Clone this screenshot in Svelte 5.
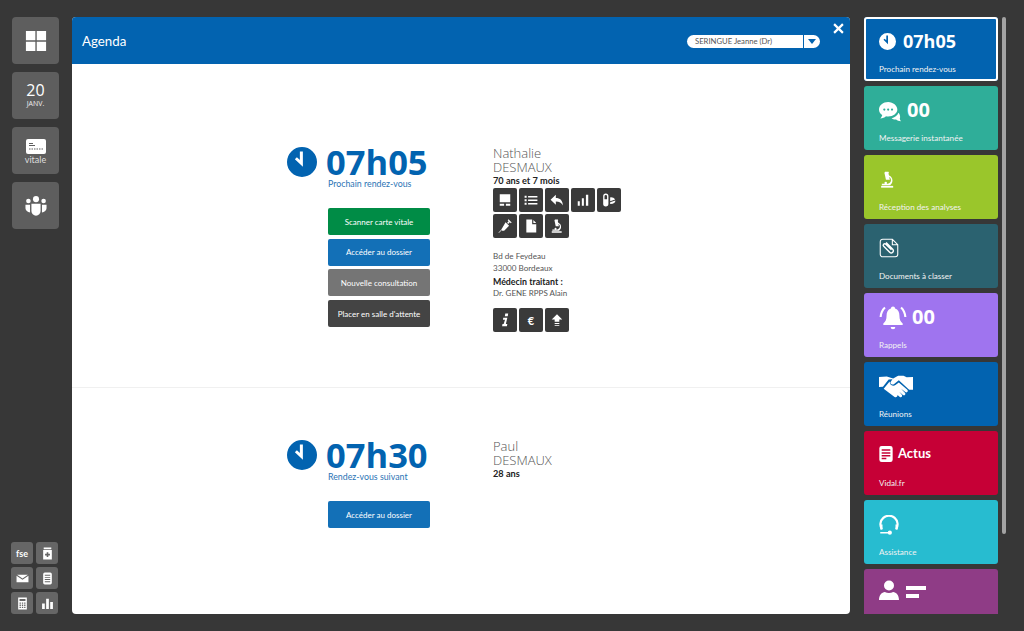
<script>
  const leftTiles = ['grid', 'date', 'vitale', 'team'];
  const smallTools = ['fse', 'box', 'mail', 'note', 'calc', 'bars'];
  const actions = ['screen', 'list', 'back', 'signal', 'pills', 'syringe', 'doc', 'micro'];
  const infos = ['info', 'euro', 'up'];
  const tiles = [
    { cls: 'blue active', icon: 'clock', value: '07h05', label: 'Prochain rendez-vous' },
    { cls: 'teal', icon: 'chat', value: '00', label: 'Messagerie instantanée' },
    { cls: 'green', icon: 'micro', value: '', label: 'Réception des analyses' },
    { cls: 'slate', icon: 'clip', value: '', label: 'Documents à classer' },
    { cls: 'violet', icon: 'bell', value: '00', label: 'Rappels' },
    { cls: 'blue', icon: 'hands', value: '', label: 'Réunions' },
    { cls: 'red', icon: 'news', value: 'Actus', label: 'Vidal.fr' },
    { cls: 'cyan', icon: 'head', value: '', label: 'Assistance' },
    { cls: 'purple', icon: 'person', value: '', label: '' }
  ];
</script>

{#snippet glyph(name)}
  <svg viewBox="0 0 24 24" fill="currentColor" class="glyph">
    {#if name === 'clock'}
      <path fill-rule="evenodd" d="M12 0a12 12 0 1 0 0 24 12 12 0 0 0 0-24zM10.300 3.500h2.400v12.300L6.300 9.700l1.600-1.600 2.400 2.300z" />
    {:else if name === 'chat'}
      <path d="M10 1C4.500 1 0 4.700 0 9.200c0 2.500 1.400 4.700 3.500 6.200-.2 1.400-1 2.700-2.100 3.800 2.600-.2 4.700-1.200 6.200-2.600.8.100 1.600.2 2.400.2 5.500 0 10-3.500 10-7.600S15.500 1 10 1z" />
      <path d="M21.200 12.800c-1.100 3-4 5.200-7.500 5.900 1.200 1.100 3 1.700 5 1.500 1.300 1 3 1.700 5.300 1.900-.8-.9-1.200-1.800-1.300-3 .9-1.800.2-4.500-1.500-6.300z" />
      <circle cx="5.800" cy="9.300" r="1.200" fill="var(--tile)" /><circle cx="10" cy="9.300" r="1.200" fill="var(--tile)" /><circle cx="14.200" cy="9.300" r="1.200" fill="var(--tile)" />
    {:else if name === 'micro'}
      <path d="M3 21h17v2.500H3z" />
      <path d="M8.500 1h5l.6 2h-.9l1 3.500c3 1.300 4.800 3.700 4.800 6.900 0 2.800-1.400 5-3.400 6.600H4v-2h8.500c2.400-.6 4.400-2.600 4.400-5 0-2-1-3.600-2.600-4.500l1 4H9.800L7.800 3h-.4z" />
      <circle cx="9.500" cy="17" r="1.800" />
    {:else if name === 'clip'}
      <path fill="none" stroke="currentColor" stroke-width="1.300" d="M4.500 1.500h11.500l6.500 6.500v11.500a3 3 0 0 1-3 3H4.500a3 3 0 0 1-3-3v-15a3 3 0 0 1 3-3zM16 1.500V8h6.500" />
      <path fill="none" stroke="currentColor" stroke-width="1.700" d="M8.500 5.500l8 8a2.600 2.600 0 0 1-3.700 3.700L5.600 10a1.800 1.800 0 0 1 2.600-2.600l6.800 6.800" />
    {:else if name === 'bell'}
      <path d="M12 3a1.800 1.800 0 0 1 1.800 1.800c2.700.9 3.700 3.100 3.700 6 0 3.700 1 5.400 2.800 6.700v1.300H3.700v-1.300c1.800-1.300 2.800-3 2.800-6.700 0-2.900 1-5.100 3.700-6A1.800 1.800 0 0 1 12 3zM10 20.600h4a2 2 0 0 1-4 0z" />
      <path d="M4.500 3.200l1.200 1.300C3.700 6.500 2.500 9 2.300 12H.5C.7 8.300 2.200 5.300 4.500 3.200zM19.500 3.200c2.300 2.100 3.800 5.100 4 8.800h-1.800c-.2-3-1.400-5.500-3.400-7.500z" />
    {:else if name === 'hands'}
      <path d="M0 5l5.500-.5 4.500 1.500 3.500-2h3.800l2.200 1.200 4.500-.2v9h-2.700l-1-1L14 7.300l-3.300 2.500c-1.400 1-3.200-.2-2.500-1.400l1.300-1.900-2.700.2-4 5.100L0 12z" />
      <path d="M3.300 13.300L7.500 8.200l.2 1.200c.4 1.500 2.600 2.200 3.900 1.200L14 8.800l6 5.200c1 1-.3 2.400-1.400 1.600l-3-2.400 2.800 3c.8 1-.5 2.200-1.500 1.400l-2.600-2.200 1.900 2.300c.6 1-.6 2-1.500 1.300l-1.600-1.300c.1 1.100-1 1.900-2.100 1.300z" />
    {:else if name === 'news'}
      <path fill-rule="evenodd" d="M5.500 0h13A3.500 3.500 0 0 1 22 3.500v17a3.500 3.500 0 0 1-3.500 3.500h-13A3.500 3.500 0 0 1 2 20.500v-17A3.500 3.500 0 0 1 5.500 0zM5.500 5v2.200h13V5zM5.500 9.300v2.200h13V9.300zM5.500 13.500v2.200h13v-2.200zM5.500 17.800V20h7v-2.200z" />
    {:else if name === 'head'}
      <path fill="none" stroke="currentColor" stroke-width="2.600" d="M3.500 17a10.300 10.300 0 1 1 17 0" />
      <path d="M1.500 11.500h2.700v6H1.500zM19.800 11.500h2.700v6h-2.700zM1.500 20.300h10v1.800h-10z" />
      <circle cx="13" cy="21.200" r="2.500" />
    {:else if name === 'person'}
      <circle cx="12" cy="6.500" r="6" />
      <path d="M0 24c0-6 3.500-9 7-9.500 3 1.500 7 1.500 10 0 3.500.5 7 3.500 7 9.500z" />
    {:else if name === 'grid'}
      <path d="M1 1h10.300v10.300H1zM12.800 1H23v10.300H12.800zM1 12.800h10.300V23H1zM12.800 12.800H23V23H12.800z" />
    {:else if name === 'team'}
      <circle cx="12" cy="4.500" r="3.300" /><circle cx="3.700" cy="6.500" r="2.500" /><circle cx="20.300" cy="6.500" r="2.500" />
      <path d="M7 9.500h10v8a5 5 0 0 1-10 0zM.5 10.500h5v8.500c-2.700-.3-5-2.200-5-4.500zM18.500 10.500h5v4c0 2.300-2.300 4.200-5 4.500z" />
    {:else if name === 'box'}
      <path fill-rule="evenodd" d="M5 1h14v3H5zM4 5.500h16V23H4zM10.500 9.500v3h-3v3h3v3h3v-3h3v-3h-3v-3z" />
    {:else if name === 'mail'}
      <path d="M2 5h20l-10 7zM1 7l11 7.500L23 7v12H1z" />
    {:else if name === 'note'}
      <path fill-rule="evenodd" d="M7 1h10a3 3 0 0 1 3 3v16a3 3 0 0 1-3 3H7a3 3 0 0 1-3-3V4a3 3 0 0 1 3-3zM7 5v1.800h10V5zM7 9v1.800h10V9zM7 13v1.800h10V13zM7 17v1.800h10V17z" />
    {:else if name === 'calc'}
      <path fill-rule="evenodd" d="M4 1h16v22H4zM6.500 3.500v4h11v-4zM6.500 10v2.500h2.500V10zM10.800 10v2.500h2.500V10zM15 10v2.500h2.500V10zM6.500 14v2.500h2.500V14zM10.800 14v2.500h2.500V14zM15 14v2.500h2.500V14zM6.500 18v2.500h2.500V18zM10.800 18v2.500h2.500V18zM15 18v2.500h2.500V18z" />
    {:else if name === 'bars'}
      <path d="M2 12h5v10H2zM9.500 3h5v19h-5zM17 9h5v13h-5z" />
    {:else if name === 'screen'}
      <path fill-rule="evenodd" d="M3 2h18v14H3zM3 18.500h7.500V22H3zM13.500 18.500H21V22h-7.500z" />
    {:else if name === 'list'}
      <path d="M1 4.500h3.500V8H1zM7 5h16v2.500H7zM1 10.500h3.500V14H1zM7 11h16v2.500H7zM1 16.500h3.500V20H1zM7 17h16v2.500H7z" />
    {:else if name === 'back'}
      <path d="M10 3v5.500c7 0 12 4 12 13-2-5-6-7-12-7V20L1 11.500z" />
    {:else if name === 'signal'}
      <path d="M3 14h3.500v8H3zM10 9h3.500v13H10zM17 3h4v19h-4z" />
    {:else if name === 'pills'}
      <path fill-rule="evenodd" d="M6.500 1a4.500 4.500 0 0 1 4.500 4.500v13a4.500 4.500 0 0 1-9 0v-13A4.500 4.500 0 0 1 6.500 1zM4.300 10.500h4.400v-5a2.200 2.200 0 0 0-4.400 0z" />
      <path d="M14 7.500c3-.6 6.500.4 8.500 3.500L14 14zM14 16l9-3.200c0 4-3.500 6.200-9 6z" />
    {:else if name === 'syringe'}
      <path d="M1.500 23.500L8 16.500" fill="none" stroke="currentColor" stroke-width="1.500" />
      <path d="M13 5.500l6 6-8.500 8.500-3.700.3-.3-3.800z" />
      <path d="M16.500 7.500l3.500-3.500" fill="none" stroke="currentColor" stroke-width="2.500" />
      <path d="M17.300 1.300l5.400 5.400" fill="none" stroke="currentColor" stroke-width="2" />
    {:else if name === 'doc'}
      <path d="M4 1h10v8h7v14H4zM16 1.500l5 5.500h-5z" />
    {:else if name === 'info'}
      <path d="M12.500 1h5l-.8 4.500h-5zM9 8h7l-2.500 11H16l-.7 3.500H7l.7-3.500h2L12 11.500H8.500z" />
    {:else if name === 'up'}
      <path d="M12 2l9 9h-5v4H8v-4H3zM8 17h8v2H8zM8 20.500h8V22H8z" />
    {/if}
  </svg>
{/snippet}

<div class="page">
  <nav class="rail">
    <div class="rail-top">
      {#each leftTiles as t}
        <button class="rail-tile">
          {#if t === 'date'}
            <span class="day">20</span>
            <span class="month">JANV.</span>
          {:else if t === 'vitale'}
            <svg viewBox="0 0 20 15" class="card-icon">
              <rect width="20" height="15" rx="2" fill="#fff" />
              <path d="M3 4h4v1H3zM3 6h6v1H3zM3 9.500h1.500v1H3zM5.500 9.500H7v1H5.500zM8 9.500h1.500v1H8zM10.500 9.500H12v1h-1.500zM13 9.500h1.500v1H13zM15.500 9.500H17v1h-1.500z" fill="#5e5e5e" />
            </svg>
            <span class="vit">vitale</span>
          {:else}
            <span class="rail-icon">{@render glyph(t)}</span>
          {/if}
        </button>
      {/each}
    </div>
    <div class="rail-tools">
      {#each smallTools as t}
        <button class="tool">
          {#if t === 'fse'}fse{:else}{@render glyph(t)}{/if}
        </button>
      {/each}
    </div>
  </nav>

  <main class="panel">
    <header class="panel-head">
      <h1>Agenda</h1>
      <div class="doctor">
        <span class="doctor-name">SERINGUE Jeanne (Dr)</span>
        <span class="doctor-arrow"></span>
      </div>
      <svg class="close" viewBox="0 0 10 10"><path d="M1 1l8 8M9 1l-8 8" stroke="#fff" stroke-width="2" /></svg>
    </header>

    <section class="slot first">
      <div class="slot-left">
        <div class="time-row">
          <span class="time-icon">{@render glyph('clock')}</span>
          <span class="time">07h05</span>
        </div>
        <div class="sub">Prochain rendez-vous</div>
        <div class="buttons">
          <button class="btn b-green">Scanner carte vitale</button>
          <button class="btn b-blue">Accéder au dossier</button>
          <button class="btn b-grey">Nouvelle consultation</button>
          <button class="btn b-dark">Placer en salle d'attente</button>
        </div>
      </div>
      <div class="slot-right">
        <div class="name">Nathalie<br />DESMAUX</div>
        <div class="age">70 ans et 7 mois</div>
        <div class="icons">
          {#each actions as a}
            <button class="act">{@render glyph(a)}</button>
          {/each}
        </div>
        <div class="addr">Bd de Feydeau<br />33000 Bordeaux</div>
        <div class="doc-title">Médecin traitant :</div>
        <div class="doc-name">Dr. GENE RPPS Alain</div>
        <div class="icons extra">
          {#each infos as a}
            <button class="act">
              {#if a === 'euro'}<span class="euro">€</span>{:else}{@render glyph(a)}{/if}
            </button>
          {/each}
        </div>
      </div>
    </section>

    <section class="slot second">
      <div class="slot-left">
        <div class="time-row">
          <span class="time-icon">{@render glyph('clock')}</span>
          <span class="time">07h30</span>
        </div>
        <div class="sub">Rendez-vous suivant</div>
        <div class="buttons low">
          <button class="btn b-blue">Accéder au dossier</button>
        </div>
      </div>
      <div class="slot-right">
        <div class="name">Paul<br />DESMAUX</div>
        <div class="age">28 ans</div>
      </div>
    </section>
  </main>

  <aside class="side">
    {#each tiles as tile}
      <div class="tile {tile.cls}">
        <div class="tile-top">
          <span class="tile-icon i-{tile.icon}">{@render glyph(tile.icon)}</span>
          {#if tile.icon === 'person'}
            <span class="lines"><i></i><i class="short"></i></span>
          {/if}
          {#if tile.value}<span class="tile-value v-{tile.icon}">{tile.value}</span>{/if}
        </div>
        <div class="tile-label">{tile.label}</div>
      </div>
    {/each}
  </aside>
  <div class="scrollbar"></div>
</div>

<style>
  :global(body) {
    margin: 0;
    background: #373737;
  }
  button {
    font-family: inherit;
    border: none;
    padding: 0;
  }
  .page {
    width: 1024px;
    height: 631px;
    overflow: hidden;
    display: flex;
    background: #373737;
    font-family: Lato, 'Open Sans', 'Liberation Sans', sans-serif;
    color: #222;
  }
  .glyph {
    display: block;
    width: 100%;
    height: 100%;
  }

  .rail {
    width: 72px;
    flex: none;
    display: flex;
    flex-direction: column;
    justify-content: space-between;
    padding: 17px 0 17px 0;
    box-sizing: border-box;
  }
  .rail-top {
    display: flex;
    flex-direction: column;
    gap: 8px;
    padding-left: 12px;
  }
  .rail-tile {
    width: 47px;
    height: 47px;
    border-radius: 4px;
    background: #5e5e5e;
    color: #fff;
    display: flex;
    flex-direction: column;
    align-items: center;
    justify-content: center;
  }
  .rail-icon {
    width: 22px;
    height: 22px;
  }
  .day {
    font-family: 'Open Sans', sans-serif;
    font-size: 16px;
    line-height: 17px;
    font-weight: 500;
  }
  .month {
    font-family: 'Open Sans', sans-serif;
    font-size: 7px;
    line-height: 10px;
    color: #eee;
  }
  .card-icon {
    width: 20px;
    height: 15px;
    margin-top: 2px;
  }
  .vit {
    font-size: 9px;
    line-height: 11px;
    color: #ddd;
  }
  .rail-tools {
    display: grid;
    grid-template-columns: 22px 22px;
    grid-auto-rows: 22px;
    gap: 3px 3px;
    padding-left: 11px;
  }
  .tool {
    border-radius: 3px;
    background: #666;
    color: #fff;
    font-size: 9px;
    font-weight: 700;
    display: flex;
    align-items: center;
    justify-content: center;
  }
  .tool .glyph {
    width: 13px;
    height: 13px;
  }

  .panel {
    width: 778px;
    height: 597px;
    flex: none;
    margin-top: 17px;
    background: #fff;
    border-radius: 4px;
    overflow: hidden;
  }
  .panel-head {
    height: 47px;
    background: #0263b0;
    color: #fff;
    display: flex;
    align-items: center;
    position: relative;
    padding-left: 10px;
  }
  h1 {
    margin: 0;
    font-size: 13.300px;
    font-weight: 400;
    flex: 1;
  }
  .doctor {
    width: 133px;
    height: 13px;
    margin-right: 30px;
    margin-top: 1px;
    background: #fff;
    border-radius: 7px;
    display: flex;
    align-items: center;
    justify-content: space-between;
    overflow: hidden;
  }
  .doctor-name {
    font-size: 7.700px;
    color: #555;
    padding-left: 8px;
  }
  .doctor-arrow {
    width: 17px;
    height: 100%;
    border-left: 1px solid #0263b0;
    box-sizing: border-box;
    position: relative;
  }
  .doctor-arrow::after {
    content: '';
    position: absolute;
    left: 4px;
    top: 4px;
    border: 4px solid transparent;
    border-top: 5px solid #0263b0;
    border-bottom: 0;
  }
  .close {
    position: absolute;
    right: 6px;
    top: 6px;
    width: 11px;
    height: 11px;
  }

  .slot {
    display: flex;
    box-sizing: border-box;
    padding-left: 215px;
  }
  .slot.first {
    height: 324px;
    padding-top: 81px;
    border-bottom: 1px solid #f0f0f0;
  }
  .slot.second {
    padding-top: 50px;
  }
  .slot-left {
    width: 206px;
    flex: none;
  }
  .time-row {
    display: flex;
    align-items: center;
    height: 33px;
    gap: 9px;
  }
  .time-icon {
    width: 30px;
    height: 30px;
    color: #0263b0;
  }
  .time {
    font-family: 'Open Sans', sans-serif;
    font-size: 34.500px;
    font-weight: 700;
    color: #0263b0;
    line-height: 33px;
  }
  .sub {
    margin: 0 0 0 41px;
    font-size: 8.800px;
    line-height: 11px;
    color: #2b74b5;
  }
  .buttons {
    margin: 19px 0 0 41px;
    width: 102px;
    display: flex;
    flex-direction: column;
    gap: 3.700px;
  }
  .btn {
    height: 27px;
    border-radius: 2px;
    color: #fff;
    font-size: 8px;
    text-align: center;
  }
  .b-green { background: #008c46; }
  .b-blue { background: #1370b7; }
  .b-grey { background: #757575; }
  .b-dark { background: #444; }

  .name {
    font-family: 'Open Sans', sans-serif;
    font-size: 13px;
    font-weight: 300;
    line-height: 14px;
    color: #555;
    margin-top: 1px;
  }
  .age {
    font-size: 9.200px;
    font-weight: 700;
    line-height: 12px;
    color: #222;
    margin-top: 1px;
  }
  .icons {
    display: grid;
    grid-template-columns: repeat(5, 24px);
    grid-auto-rows: 24px;
    gap: 1.500px 2px;
    margin-top: 1px;
  }
  .icons.extra {
    margin-top: 9px;
  }
  .act {
    border-radius: 2px;
    background: #3a3a3a;
    color: #fff;
    display: flex;
    align-items: center;
    justify-content: center;
  }
  .act .glyph {
    width: 14px;
    height: 14px;
  }
  .euro {
    font-size: 11px;
    font-weight: 700;
  }
  .addr {
    margin-top: 12.500px;
    font-size: 8.100px;
    line-height: 12px;
    color: #555;
  }
  .doc-title {
    margin-top: 2px;
    font-size: 8.800px;
    line-height: 12px;
    font-weight: 700;
    color: #222;
  }
  .doc-name {
    font-size: 8px;
    line-height: 11px;
    color: #555;
  }

  .side {
    width: 134px;
    flex: none;
    margin: 17px 0 0 14px;
    display: flex;
    flex-direction: column;
    gap: 5px;
    height: 597px;
    overflow: hidden;
  }
  .tile {
    --tile: #0263b0;
    height: 64px;
    flex: none;
    box-sizing: border-box;
    border-radius: 3px;
    padding: 13px 15px 0;
    color: #fff;
    background: var(--tile);
    display: flex;
    flex-direction: column;
    position: relative;
  }
  .tile.active {
    outline: 2px solid #fff;
    outline-offset: -2px;
  }
  .teal { --tile: #2fae99; }
  .green { --tile: #9ac62b; }
  .slate { --tile: #2b6270; }
  .violet { --tile: #9f74ef; }
  .red { --tile: #c60036; }
  .cyan { --tile: #27bcd0; }
  .purple { --tile: #8f3c86; }
  .tile-top {
    display: flex;
    align-items: center;
    height: 22px;
    gap: 7px;
  }
  .tile-icon {
    width: 20px;
    height: 20px;
    flex: none;
  }
  .i-clock {
    width: 17px;
    height: 17px;
  }
  .i-chat {
    width: 22px;
    height: 22px;
    margin-top: 3px;
    margin-right: -1px;
  }
  .i-micro {
    width: 17px;
    height: 17px;
  }
  .i-bell {
    width: 28px;
    height: 28px;
    margin-top: -1px;
    margin-right: -2px;
  }
  .i-hands {
    width: 34px;
    height: 34px;
    margin-top: 1px;
  }
  .i-news {
    width: 16px;
    height: 18px;
    margin-left: -1px;
    margin-top: -2px;
    margin-right: -3px;
  }
  .i-head {
    margin-top: 1px;
  }
  .i-person {
    margin-top: -6px;
  }
  .tile-value {
    font-family: 'Open Sans', sans-serif;
    font-size: 18px;
    font-weight: 700;
    line-height: 22px;
  }
  .v-chat { font-size: 20px; }
  .v-bell { font-size: 20px; }
  .v-news {
    font-family: Lato, sans-serif;
    font-size: 13px;
    margin-top: -4px;
  }
  .lines {
    display: flex;
    flex-direction: column;
    gap: 4px;
    margin-top: -3px;
  }
  .lines i {
    display: block;
    width: 20px;
    height: 4px;
    background: #fff;
  }
  .lines i.short {
    width: 13px;
  }
  .tile-label {
    position: absolute;
    left: 15px;
    top: 47px;
    font-size: 8.100px;
    line-height: 11px;
    color: #f2f2f2;
  }
  .scrollbar {
    width: 4px;
    height: 517px;
    margin: 17px 0 0 4px;
    flex: none;
    background: #a3a3a3;
    border-radius: 2px;
  }
</style>
